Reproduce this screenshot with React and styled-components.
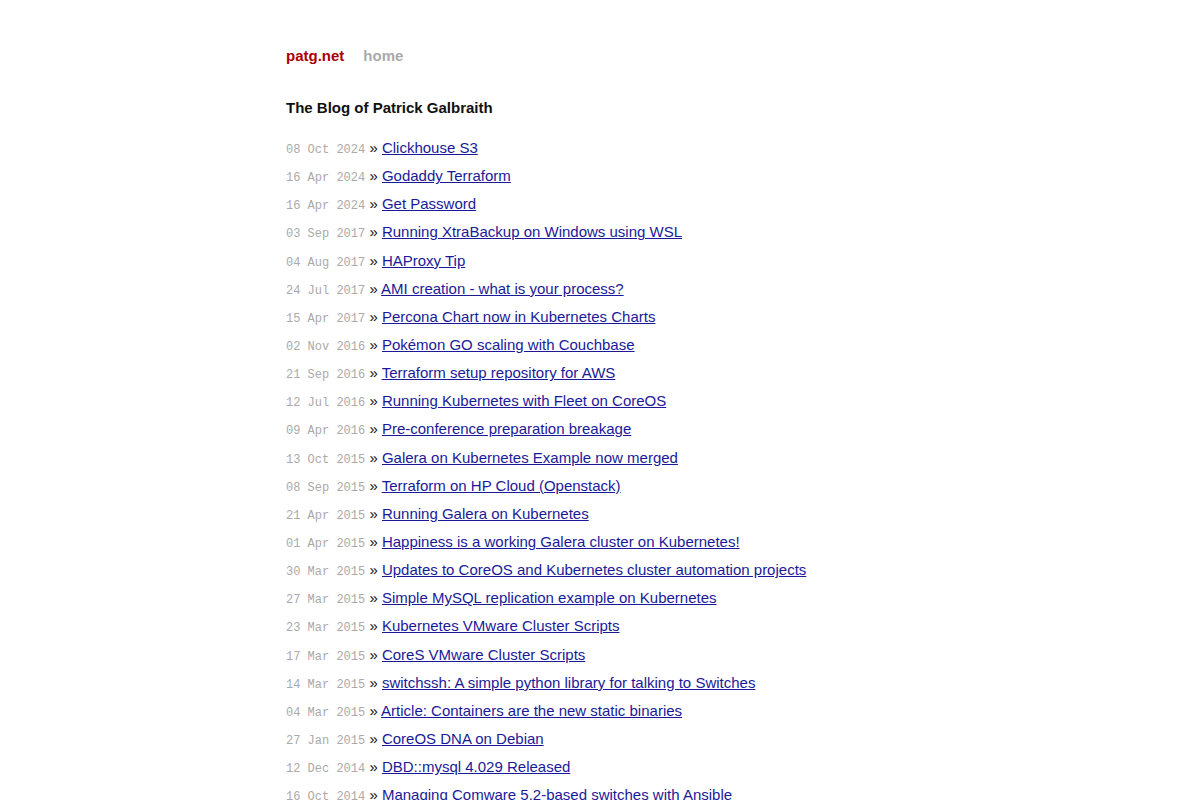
import React from 'react';
import styled, { createGlobalStyle } from 'styled-components';

const GlobalStyle = createGlobalStyle`
  html, body {
    margin: 0;
    padding: 0;
    background: #fff;
  }
  body {
    font-family: "Liberation Sans", Arial, sans-serif;
    font-size: 15px;
    color: #111;
  }
`;

const posts = [
    { date: '08 Oct 2024', title: 'Clickhouse S3' },
    { date: '16 Apr 2024', title: 'Godaddy Terraform' },
    { date: '16 Apr 2024', title: 'Get Password' },
    { date: '03 Sep 2017', title: 'Running XtraBackup on Windows using WSL' },
    { date: '04 Aug 2017', title: 'HAProxy Tip' },
    { date: '24 Jul 2017', title: 'AMI creation - what is your process?' },
    { date: '15 Apr 2017', title: 'Percona Chart now in Kubernetes Charts' },
    { date: '02 Nov 2016', title: 'Pokémon GO scaling with Couchbase' },
    { date: '21 Sep 2016', title: 'Terraform setup repository for AWS' },
    { date: '12 Jul 2016', title: 'Running Kubernetes with Fleet on CoreOS' },
    { date: '09 Apr 2016', title: 'Pre-conference preparation breakage' },
    { date: '13 Oct 2015', title: 'Galera on Kubernetes Example now merged' },
    { date: '08 Sep 2015', title: 'Terraform on HP Cloud (Openstack)' },
    { date: '21 Apr 2015', title: 'Running Galera on Kubernetes' },
    { date: '01 Apr 2015', title: 'Happiness is a working Galera cluster on Kubernetes!' },
    { date: '30 Mar 2015', title: 'Updates to CoreOS and Kubernetes cluster automation projects' },
    { date: '27 Mar 2015', title: 'Simple MySQL replication example on Kubernetes' },
    { date: '23 Mar 2015', title: 'Kubernetes VMware Cluster Scripts' },
    { date: '17 Mar 2015', title: 'CoreS VMware Cluster Scripts' },
    { date: '14 Mar 2015', title: 'switchssh: A simple python library for talking to Switches' },
    { date: '04 Mar 2015', title: 'Article: Containers are the new static binaries' },
    { date: '27 Jan 2015', title: 'CoreOS DNA on Debian' },
    { date: '12 Dec 2014', title: 'DBD::mysql 4.029 Released' },
    { date: '16 Oct 2014', title: 'Managing Comware 5.2-based switches with Ansible' },
];

const Container = styled.div`
  width: 628px;
  margin: 0 auto;
  padding-top: 47px;
`;

const Masthead = styled.nav`
  display: flex;
  align-items: baseline;
  gap: 19px;
  line-height: 18px;
`;

const NavLink = styled.a`
  font-weight: bold;
  font-size: 15px;
  text-decoration: none;
  color: ${p => (p.$brand ? '#a00' : '#aaa')};
`;

const Title = styled.h1`
  font-size: 15px;
  font-weight: bold;
  line-height: 18px;
  margin: 34px 0 17px;
  color: #111;
`;

const PostList = styled.ul`
  list-style: none;
  margin: 0;
  padding: 0;
`;

const PostItem = styled.li`
  height: 28.15px;
  line-height: 28.15px;
  white-space: nowrap;
`;

const PostDate = styled.span`
  font-family: "Liberation Mono", "Courier New", monospace;
  font-size: 12px;
  line-height: 1;
  color: #aaa;
`;

const PostLink = styled.a`
  color: #1a1a99;
  text-decoration: underline;
`;

export default function App() {
    return (
        <>
            <GlobalStyle />
            <Container>
                <Masthead>
                    <NavLink $brand href="#">patg.net</NavLink>
                    <NavLink href="#">home</NavLink>
                </Masthead>

                <Title>The Blog of Patrick Galbraith</Title>

                <PostList>
                    {posts.map((post, i) =>
                        <PostItem key={i}>
                            <PostDate>{post.date}</PostDate> » <PostLink href="#">{post.title}</PostLink>
                        </PostItem>
                    )}
                </PostList>
            </Container>
        </>
    );
}
